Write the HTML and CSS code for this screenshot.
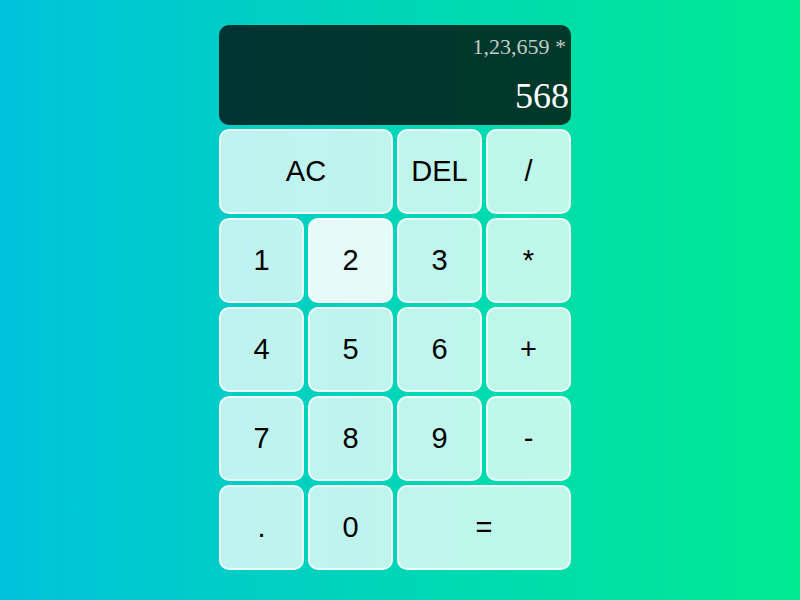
FILE: index.html
```html
<!DOCTYPE html>
<html lang="en">
<head>
<meta charset="utf-8">
<meta name="viewport" content="width=device-width, initial-scale=1">
<title>Calculator</title>
<link rel="stylesheet" href="styles.css">
</head>
<body>
<main class="calculator">
  <div class="output">
    <div class="previous">1,23,659 *</div>
    <div class="current">568</div>
  </div>
  <button class="span-two">AC</button>
  <button>DEL</button>
  <button>/</button>
  <button>1</button>
  <button class="active">2</button>
  <button>3</button>
  <button>*</button>
  <button>4</button>
  <button>5</button>
  <button>6</button>
  <button>+</button>
  <button>7</button>
  <button>8</button>
  <button>9</button>
  <button>-</button>
  <button>.</button>
  <button>0</button>
  <button class="span-two">=</button>
</main>
</body>
</html>
```

FILE: styles.css
```css
*, *::before, *::after {
  box-sizing: border-box;
}

body {
  margin: 0;
  min-height: 100vh;
  background: linear-gradient(to right, #00c2dc, #00ea92);
}

.calculator {
  display: grid;
  grid-template-columns: repeat(4, 85px);
  grid-template-rows: minmax(100px, auto) repeat(5, 85px);
  gap: 4px;
  justify-content: center;
  padding: 25px 10px 0 0;
}

.output {
  grid-column: 1 / -1;
  display: flex;
  flex-direction: column;
  align-items: flex-end;
  justify-content: space-between;
  padding: 9px 2px 8px;
  border-radius: 10px;
  background: rgba(0, 0, 0, 0.75);
  font-family: "Liberation Serif", "Times New Roman", serif;
  overflow-wrap: anywhere;
}

.previous {
  padding-right: 3px;
  color: rgba(255, 255, 255, 0.75);
  font-size: 22px;
  line-height: 26px;
}

.current {
  color: #fff;
  font-size: 36px;
  line-height: 42px;
}

button {
  padding: 0;
  border: 2px solid rgba(255, 255, 255, 0.7);
  border-radius: 10px;
  background: rgba(255, 255, 255, 0.75);
  color: #000;
  font-family: "Liberation Sans", Arial, sans-serif;
  font-size: 29px;
  cursor: pointer;
}

button:hover,
.active {
  background-color: rgba(255, 255, 255, 0.9);
}

.span-two {
  grid-column: span 2;
}
```
